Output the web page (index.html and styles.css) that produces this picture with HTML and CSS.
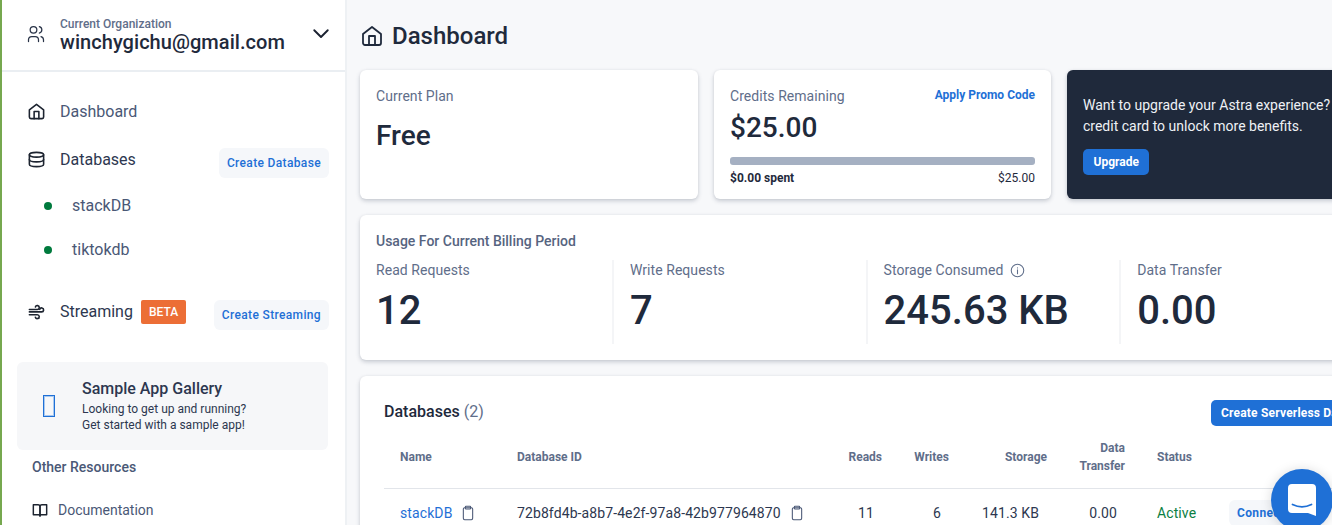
FILE: index.html
```html
<!DOCTYPE html>
<html lang="en">
<head>
  <meta charset="UTF-8">
  <meta name="viewport" content="width=device-width, initial-scale=1">
  <title>Astra Dashboard</title>
  <link rel="stylesheet" href="styles.css">
</head>
<body>
  <div class="app">
    <aside class="sidebar">
      <div class="org">
        <svg class="icon org-icon" viewBox="0 0 24 24"><circle cx="9" cy="7" r="4"/><path d="M3 21v-2a4 4 0 0 1 4-4h4a4 4 0 0 1 4 4v2"/><path d="M16 3.13a4 4 0 0 1 0 7.75"/><path d="M21 21v-2a4 4 0 0 0-3-3.85"/></svg>
        <div class="org-text">
          <div class="org-label">Current Organization</div>
          <div class="org-name">winchygichu@gmail.com</div>
        </div>
        <svg class="icon chevron" viewBox="0 0 24 24"><path d="M3 7l9 9 9-9"/></svg>
      </div>

      <nav class="nav">
        <div class="nav-row">
          <svg class="icon nav-icon" viewBox="0 0 24 24"><path d="M3 10l9-7 9 7v9a2 2 0 0 1-2 2H5a2 2 0 0 1-2-2z"/><path d="M9 21v-9h6v9"/></svg>
          <span class="nav-link">Dashboard</span>
        </div>
        <div class="nav-row">
          <svg class="icon nav-icon" viewBox="0 0 24 24"><ellipse cx="12" cy="6" rx="9" ry="3"/><path d="M3 6v6c0 1.66 4 3 9 3s9-1.34 9-3V6"/><path d="M3 12v6c0 1.66 4 3 9 3s9-1.34 9-3v-6"/></svg>
          <span class="nav-link nav-dark">Databases</span>
          <button class="btn-soft nav-btn">Create Database</button>
        </div>
        <div class="db-row"><span class="dot"></span><span class="nav-link">stackDB</span></div>
        <div class="db-row"><span class="dot"></span><span class="nav-link">tiktokdb</span></div>
        <div class="nav-row streaming">
          <svg class="icon nav-icon" viewBox="0 0 24 24"><path d="M3 9.5h10a2.5 2.5 0 1 0-2.4-3.2"/><path d="M3 12.5h15.5a2.5 2.5 0 1 0-2.4-3.2"/><path d="M3 16h10a2.5 2.5 0 1 1-2.4 3.2"/></svg>
          <span class="nav-link nav-dark">Streaming</span>
          <span class="beta">BETA</span>
          <button class="btn-soft nav-btn">Create Streaming</button>
        </div>
      </nav>

      <div class="gallery">
        <span class="tofu"></span>
        <div class="gallery-body">
          <div class="gallery-title">Sample App Gallery</div>
          <div class="gallery-text">Looking to get up and running?<br>Get started with a sample app!</div>
        </div>
      </div>

      <div class="resources-title">Other Resources</div>
      <div class="resource">
        <svg class="icon book" viewBox="0 0 24 24"><path d="M2 4h7a3 3 0 0 1 3 3v14a2 2 0 0 0-2-2H2z"/><path d="M22 4h-7a3 3 0 0 0-3 3v14a2 2 0 0 1 2-2h8z"/></svg>
        <span class="nav-link resource-link">Documentation</span>
      </div>
    </aside>

    <main class="main">
      <div class="content">
        <div class="page-title">
          <svg class="icon title-icon" viewBox="0 0 24 24"><path d="M3 10l9-7 9 7v9a2 2 0 0 1-2 2H5a2 2 0 0 1-2-2z"/><path d="M9 21v-9h6v9"/></svg>
          <h1>Dashboard</h1>
        </div>

        <div class="top-cards">
          <section class="card plan">
            <div class="muted">Current Plan</div>
            <div class="plan-name">Free</div>
          </section>
          <section class="card credits">
            <div class="credits-head">
              <span class="muted">Credits Remaining</span>
              <a class="promo">Apply Promo Code</a>
            </div>
            <div class="credits-value">$25.00</div>
            <div class="bar"></div>
            <div class="bar-labels"><b>$0.00 spent</b><span>$25.00</span></div>
          </section>
          <section class="card upgrade">
            <p>Want to upgrade your Astra experience? Add a credit card to unlock more benefits.</p>
            <button class="btn-primary upgrade-btn">Upgrade</button>
          </section>
        </div>

        <section class="card usage">
          <div class="usage-title">Usage For Current Billing Period</div>
          <div class="stats">
            <div class="stat"><div class="muted">Read Requests</div><div class="stat-value">12</div></div>
            <div class="stat"><div class="muted">Write Requests</div><div class="stat-value">7</div></div>
            <div class="stat">
              <div class="muted">Storage Consumed
                <svg class="icon info" viewBox="0 0 24 24"><circle cx="12" cy="12" r="10"/><path d="M12 11v6"/><path d="M12 7.5v.5"/></svg>
              </div>
              <div class="stat-value">245.63 KB</div>
            </div>
            <div class="stat"><div class="muted">Data Transfer</div><div class="stat-value">0.00</div></div>
          </div>
        </section>

        <section class="card databases">
          <div class="db-head">
            <h2>Databases <span>(2)</span></h2>
            <button class="btn-primary create-btn">Create Serverless Database</button>
          </div>
          <table class="db-table">
            <colgroup>
              <col class="c-name"><col class="c-id"><col class="c-reads"><col class="c-writes"><col class="c-storage"><col class="c-transfer"><col class="c-status"><col>
            </colgroup>
            <thead>
              <tr>
                <th>Name</th>
                <th>Database ID</th>
                <th class="num">Reads</th>
                <th class="num">Writes</th>
                <th class="num">Storage</th>
                <th class="num">Data Transfer</th>
                <th>Status</th>
                <th></th>
              </tr>
            </thead>
            <tbody>
              <tr>
                <td><a class="db-link">stackDB</a><svg class="icon clip" viewBox="0 0 24 24"><rect x="5" y="4" width="14" height="18" rx="2"/><rect x="8" y="2" width="8" height="4" rx="1"/></svg></td>
                <td>72b8fd4b-a8b7-4e2f-97a8-42b977964870<svg class="icon clip clip-id" viewBox="0 0 24 24"><rect x="5" y="4" width="14" height="18" rx="2"/><rect x="8" y="2" width="8" height="4" rx="1"/></svg></td>
                <td class="num">11</td>
                <td class="num">6</td>
                <td class="num">141.3 KB</td>
                <td class="num">0.00</td>
                <td class="active">Active</td>
                <td><button class="btn-soft connect">Connect</button></td>
              </tr>
            </tbody>
          </table>
        </section>
      </div>
    </main>
  </div>

  <div class="chat">
    <svg viewBox="0 0 28 32" width="28" height="32"><path d="M4 0h20a4 4 0 0 1 4 4v28l-8-3H4a4 4 0 0 1-4-4V4a4 4 0 0 1 4-4z" fill="#fff"/><path d="M4.5 20.5c6 3 13 3 19 0" fill="none" stroke="#1f70d6" stroke-width="1.8" stroke-linecap="round"/></svg>
  </div>
</body>
</html>
```

FILE: styles.css
```css
* {
  box-sizing: border-box;
}
html, body {
  height: 100%;
}
body {
  margin: 0;
  font-family: Roboto, "Liberation Sans", sans-serif;
  font-size: 14px;
  color: #1f2a3c;
  background: #f7f8fa;
  overflow: hidden;
}
button {
  font-family: inherit;
  border: 0;
  cursor: pointer;
}
.icon {
  fill: none;
  stroke: currentColor;
  stroke-width: 2;
  stroke-linecap: round;
  stroke-linejoin: round;
  flex: none;
}
.app {
  display: flex;
  height: 525px;
  overflow: hidden;
}

/* sidebar */
.sidebar {
  flex: none;
  width: 347px;
  height: 525px;
  background: #fff;
  border-left: 2px solid #76a84f;
  border-right: 2px solid #eef1f4;
  overflow: hidden;
}
.org {
  display: flex;
  align-items: center;
  height: 72px;
  padding: 0 14px 0 26px;
  border-bottom: 2px solid #eaeef2;
}
.org-icon {
  width: 20px;
  height: 20px;
  margin: -2px 14px 0 -2px;
  stroke-width: 1.5;
  color: #2a3448;
}
.org-text {
  flex: 1;
}
.org-label {
  font-size: 12px;
  line-height: 15px;
  font-weight: 500;
  color: #5f6e8a;
}
.org-name {
  margin-top: -1px;
  font-size: 20px;
  line-height: 22px;
  font-weight: 500;
  letter-spacing: 0.05px;
  color: #1f2a3c;
}
.chevron {
  width: 18px;
  height: 18px;
  color: #1a2130;
  margin-right: 1px;
  margin-top: -3px;
  stroke-width: 2.5;
}
.nav {
  padding: 15px 16px 0 26px;
}
.nav-row {
  display: flex;
  align-items: center;
  height: 48px;
}
.nav-icon {
  width: 19px;
  height: 19px;
  margin: 0 14px 0 -1px;
  stroke-width: 2;
  color: #1d2430;
}
.nav-link {
  font-size: 16px;
  color: #4a5876;
}
.nav-dark {
  color: #2d3750;
}
.nav-btn {
  margin-left: auto;
  margin-top: 8px;
}
.btn-soft {
  height: 30px;
  padding: 0 8px;
  font-size: 12px;
  font-weight: 500;
  letter-spacing: 0.35px;
  color: #1f70d6;
  background: #f5f7fa;
  border-radius: 6px;
}
.db-row {
  display: flex;
  align-items: center;
  height: 44px;
  padding-left: 16px;
}
.dot {
  width: 8px;
  height: 8px;
  margin-right: 20px;
  margin-top: 2px;
  border-radius: 50%;
  background: #007a3d;
}
.streaming {
  margin-top: 16px;
}
.beta {
  margin-left: 8px;
  padding: 0 8px;
  height: 24px;
  line-height: 24px;
  margin-top: 2px;
  font-size: 12px;
  font-weight: 500;
  color: #fff;
  background: #ec6e36;
  border-radius: 2px;
}
.gallery {
  display: flex;
  align-items: center;
  height: 88px;
  margin: 27px 17px 0 15px;
  padding-left: 26px;
  background: #f6f7f9;
  border-radius: 6px;
}
.gallery-body {
  margin-top: -2px;
}
.tofu {
  width: 12px;
  height: 22px;
  margin-right: 27px;
  border: 1px solid #1f70d6;
  box-shadow: inset 0 0 0 1px #a9c9f0;
}
.gallery-title {
  font-size: 16px;
  line-height: 22px;
  font-weight: 500;
  color: #2d3750;
}
.gallery-text {
  margin-top: 1px;
  font-size: 12px;
  line-height: 16px;
  color: #2d3750;
}
.resources-title {
  height: 34px;
  line-height: 34px;
  padding-left: 30px;
  font-size: 14px;
  font-weight: 500;
  color: #4a5876;
}
.resource {
  display: flex;
  align-items: center;
  height: 52px;
  padding-left: 30px;
}
.book {
  width: 16px;
  height: 16px;
  margin-right: 10px;
  stroke-width: 2.2;
  color: #1d2430;
}
.resource-link {
  font-size: 14px;
}

/* main area */
.main {
  flex: 1;
  min-width: 0;
  overflow: hidden;
  padding-left: 13px;
}
.content {
  width: 1046px;
}
.page-title {
  display: flex;
  align-items: center;
  height: 70px;
  padding-top: 2px;
}
.title-icon {
  width: 24px;
  height: 24px;
  margin-right: 8px;
  stroke-width: 1.8;
}
h1 {
  margin: 0;
  font-size: 24px;
  font-weight: 500;
  color: #1f2a3c;
}
.card {
  background: #fff;
  border-radius: 6px;
  box-shadow: 0 2px 4px rgba(60, 70, 95, 0.25), 0 0 2px rgba(60, 70, 95, 0.08);
}
.top-cards {
  display: grid;
  grid-template-columns: 338px 337px 338px;
  gap: 16px;
  height: 129px;
}
.muted {
  font-size: 14px;
  line-height: 20px;
  letter-spacing: 0.05px;
  color: #5f6e8a;
}
.plan {
  padding: 16px;
}
.plan-name {
  margin-top: 11px;
  font-size: 28px;
  line-height: 38px;
  font-weight: 500;
}
.credits {
  padding: 16px 16px 0;
}
.credits-head {
  display: flex;
  justify-content: space-between;
}
.promo {
  font-size: 12px;
  line-height: 18px;
  font-weight: 700;
  color: #1f70d6;
}
.credits-value {
  margin-top: 4px;
  font-size: 28px;
  line-height: 36px;
  font-weight: 500;
}
.bar {
  height: 8px;
  margin-top: 11px;
  background: #a5b0c2;
  border-radius: 3px;
}
.bar-labels {
  display: flex;
  justify-content: space-between;
  margin-top: 5px;
  font-size: 12px;
  line-height: 16px;
}
.upgrade {
  padding: 25px 16px 0;
  background: #1f293b;
  color: #eef1f5;
}
.upgrade p {
  margin: 0;
  line-height: 21px;
}
.upgrade-btn {
  margin-top: 12px;
  height: 26px;
  padding: 0 10.5px;
}
.btn-primary {
  font-size: 12px;
  font-weight: 700;
  color: #fff;
  background: #1f70d6;
  border-radius: 5px;
}
.usage {
  height: 145px;
  margin-top: 16px;
  padding: 16px;
}
.usage-title {
  font-size: 14px;
  line-height: 20px;
  font-weight: 500;
  color: #566480;
}
.stats {
  display: grid;
  grid-template-columns: 238px repeat(3, 253.6px);
  margin-top: 9px;
}
.stat {
  height: 84px;
  border-right: 2px solid #f4f5f7;
}
.stat:last-child {
  border-right: 0;
}
.stat + .stat {
  padding-left: 16px;
}
.stat-value {
  margin-top: 6px;
  font-size: 40px;
  line-height: 50px;
  font-weight: 500;
  color: #1f2a3c;
}
.info {
  width: 15px;
  height: 15px;
  margin-left: 3px;
  stroke-width: 1.7;
  vertical-align: -3px;
}
.databases {
  margin-top: 16px;
  padding: 24px 24px 0;
  height: 200px;
}
.db-head {
  display: flex;
  justify-content: space-between;
  align-items: center;
  height: 26px;
}
h2 {
  margin: -4px 0 0;
  font-size: 16px;
  font-weight: 500;
  color: #1f2a3c;
}
h2 span {
  font-weight: 400;
  color: #5f6e8a;
}
.create-btn {
  height: 26px;
  padding: 0 10px;
  width: 170px;
  white-space: nowrap;
  letter-spacing: 0.2px;
  margin-right: 1px;
}
.db-table {
  width: 100%;
  margin-top: 12px;
  table-layout: fixed;
  border-collapse: collapse;
}
.c-name { width: 117px; }
.c-id { width: 331px; }
.c-reads { width: 66px; }
.c-writes { width: 67px; }
.c-storage { width: 98px; }
.c-transfer { width: 78px; }
.c-status { width: 72px; }
.db-table th {
  height: 50px;
  padding: 0 16px 12px;
  font-size: 12px;
  line-height: 18px;
  font-weight: 700;
  text-align: left;
  color: #5f6e8a;
  border-bottom: 1px solid #e2e5ea;
}
.db-table th.num {
  text-align: right;
}
.db-table td {
  height: 50px;
  padding: 0 16px 1px;
  font-size: 14px;
  letter-spacing: 0.1px;
  color: #2d3750;
  white-space: nowrap;
}
.db-table td.num {
  padding-right: 24px;
  text-align: right;
}
.db-link {
  color: #1f70d6;
}
.clip {
  width: 16px;
  height: 16px;
  margin-left: 8px;
  stroke-width: 1.6;
  vertical-align: -3px;
  color: #4a5876;
}
.db-table .active {
  color: #0b8043;
}
.connect {
  height: 26px;
  padding: 0 8px;
  font-weight: 700;
}

/* chat launcher */
.chat {
  position: fixed;
  left: 1271px;
  top: 469px;
  width: 62px;
  height: 62px;
  display: flex;
  align-items: center;
  justify-content: center;
  background: #1f70d6;
  border-radius: 50%;
  box-shadow: 0 1px 12px rgba(0, 0, 0, 0.15);
}
```
